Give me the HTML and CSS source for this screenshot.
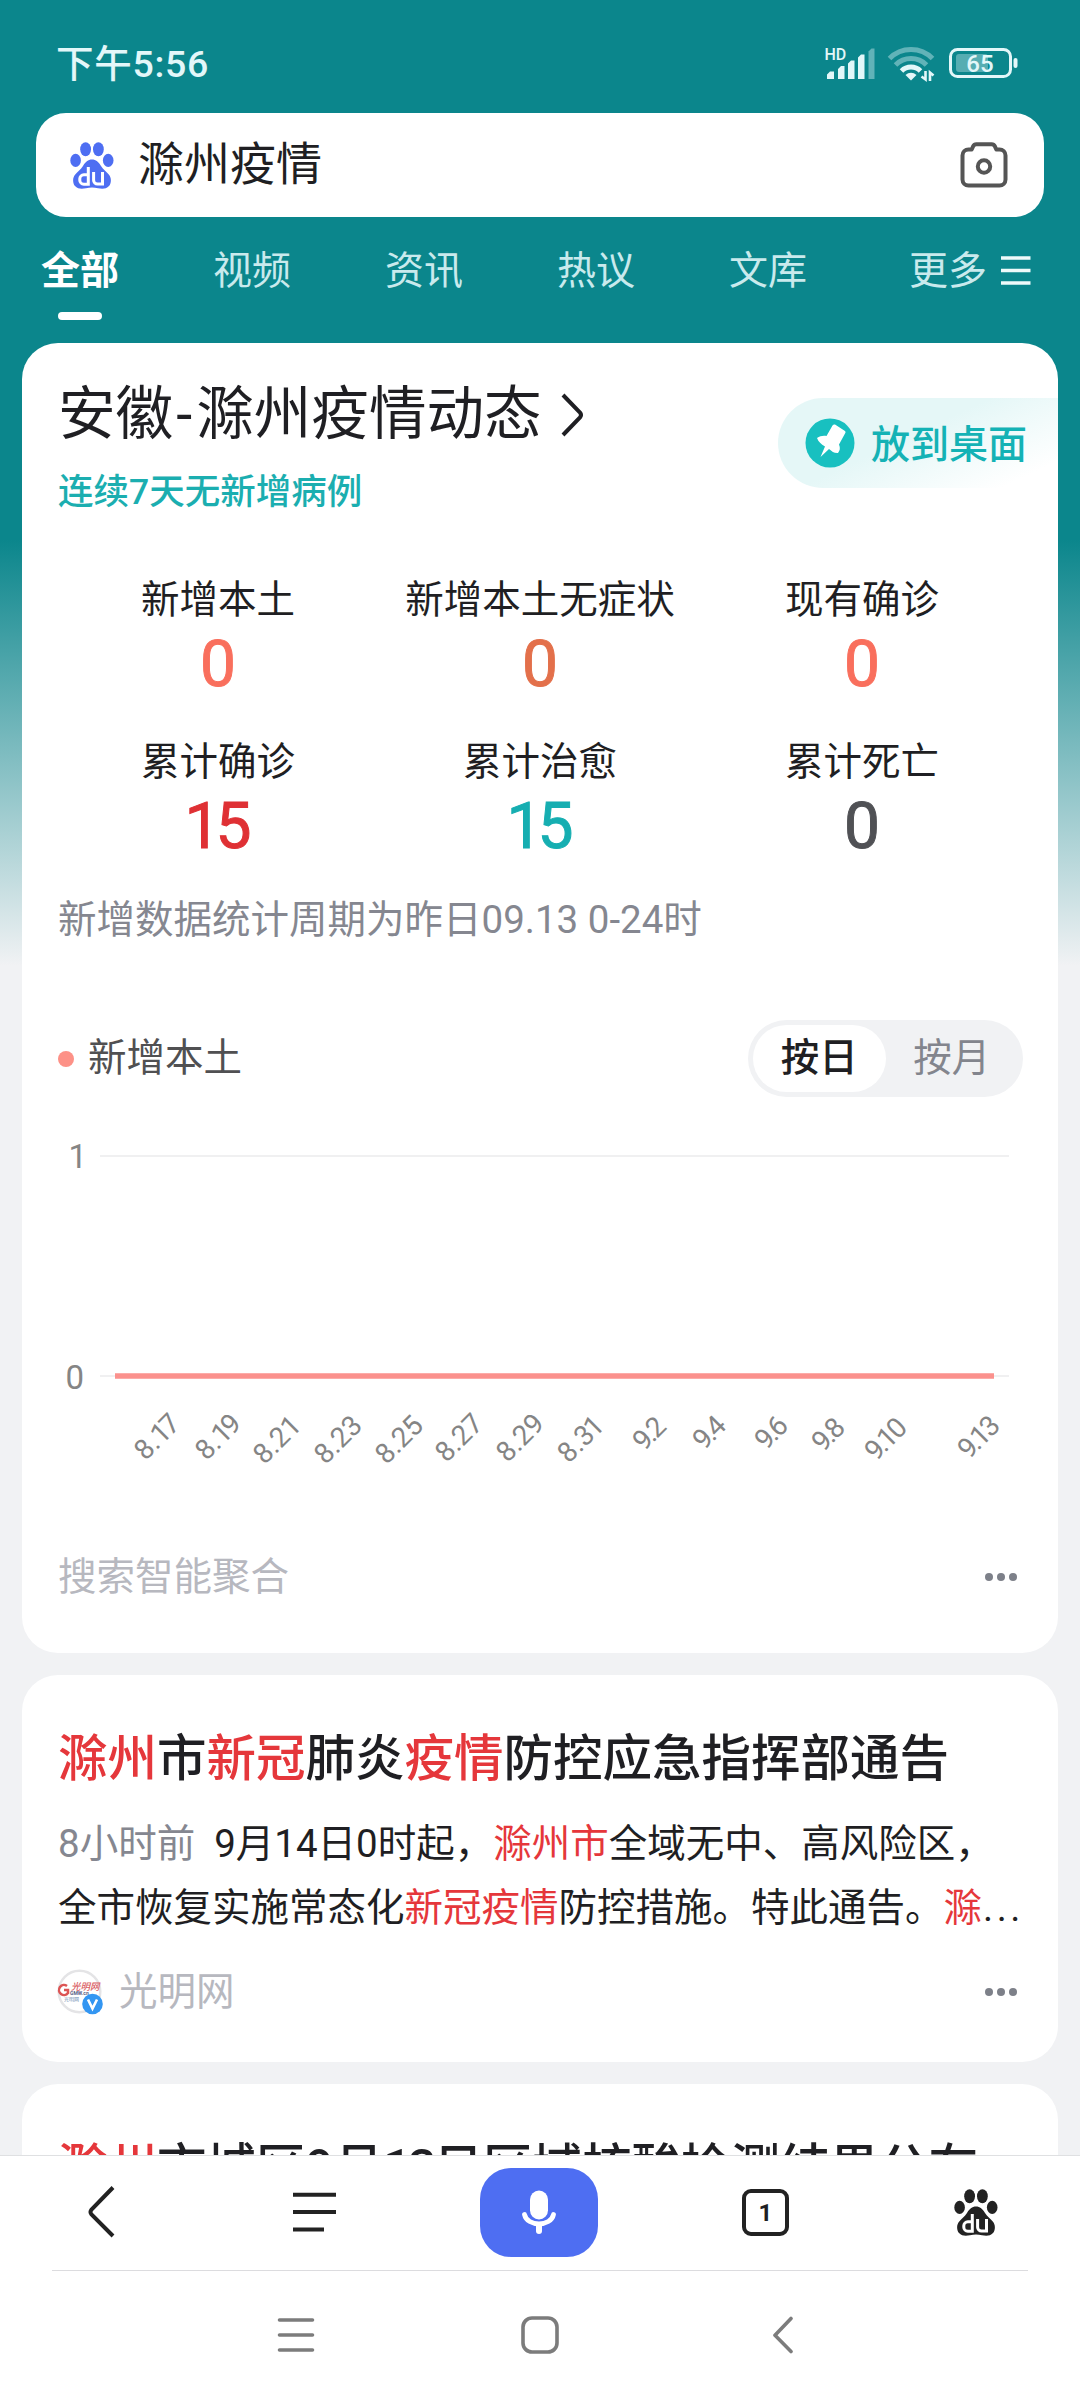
FILE: index.html
```html
<!DOCTYPE html>
<html lang="zh-CN">
<head>
<meta charset="utf-8">
<title>滁州疫情</title>
<link rel="stylesheet" href="styles.css">
</head>
<body>
<svg class="defs" width="0" height="0" aria-hidden="true">
  <symbol id="paw" viewBox="0 0 44 47">
    <ellipse cx="15.6" cy="7.2" rx="5.4" ry="7"/>
    <ellipse cx="28.4" cy="7.2" rx="5.4" ry="7"/>
    <ellipse cx="5.6" cy="18.4" rx="5.3" ry="6.6"/>
    <ellipse cx="38.2" cy="18.4" rx="5.3" ry="6.6"/>
    <path d="M22 17.600c4 0 6.600 2.600 9 6.400 2.400 3.600 5.200 5.400 8 8.800 2.600 3.200 2.400 8.400 0 11.200-3 3.400-7.600 2.900-11 2.200-4-.8-8-.8-12 0-3.400.7-8 1.200-11-2.200-2.400-2.800-2.600-8 0-11.200 2.800-3.400 5.600-5.200 8-8.800 2.400-3.800 5-6.400 9-6.400z"/>
    <g fill="none" stroke="#fff" stroke-width="3">
      <path d="M18.300 25v17.200h-4.500a4 4 0 0 1-4-4v-1.400a4 4 0 0 1 4-4h4.500"/>
      <path d="M23.600 30v8.200a3.900 3.900 0 0 0 3.900 3.900h5V30"/>
    </g>
  </symbol>
</svg>
<div class="screen">
  <header class="top">
    <div class="status">
      <span class="time">下午5:56</span>
      <svg class="status-icons" width="196" height="40" viewBox="824 43 196 40">
        <text class="hd" x="824.500" y="59.500">HD</text>
        <g fill="#e3f7f9">
          <path d="M827 79v-4.500l3-3h4V79zM838 79V69l3-3h3.500v13zM848 79V63.500l3-3h3.500V79zM858 79V57.500l3-3h3.500V79z"/>
          <path opacity=".4" d="M868.500 79V51.500l3-3h3V79z"/>
        </g>
        <g fill="none" stroke="#e3f7f9" stroke-width="5">
          <path opacity=".4" d="M889.500 58.500a30 30 0 0 1 43 0"/>
          <path opacity=".4" d="M895.500 65a22 22 0 0 1 31 0"/>
          <path d="M901.500 71a13.500 13.500 0 0 1 19 0"/>
        </g>
        <path fill="#e3f7f9" d="M911 80.500l-5.500-5.500a8 8 0 0 1 11 0z"/>
        <path fill="none" stroke="#e3f7f9" stroke-width="2.600" d="M925.500 71v8.500l-4-3M930 81v-8.500l3.500 3"/>
        <rect x="950.500" y="49.500" width="60" height="27" rx="7" fill="none" stroke="#e3f7f9" stroke-width="3"/>
        <rect x="956" y="54" width="32" height="18" rx="3" fill="#e3f7f9" opacity=".35"/>
        <rect x="1013.500" y="58" width="4" height="10" rx="2" fill="#e3f7f9"/>
        <text class="battery" x="980" y="71.500">65</text>
      </svg>
    </div>
    <div class="search">
      <svg class="search-logo" width="44" height="47"><use href="#paw"/></svg>
      <span class="query">滁州疫情</span>
      <svg class="camera" width="48" height="46" viewBox="0 0 48 46" fill="none" stroke="#555" stroke-width="4" stroke-linejoin="round">
        <path d="M8.500 7.500h3.200l1.500-3.300a3.500 3.500 0 0 1 3.200-2h15.200a3.500 3.500 0 0 1 3.200 2l1.500 3.300h3.200a6 6 0 0 1 6 6v24a6 6 0 0 1-6 6h-31a6 6 0 0 1-6-6v-24a6 6 0 0 1 6-6z"/>
        <circle cx="24" cy="24.500" r="6.200"/>
      </svg>
    </div>
    <nav class="tabs">
      <span class="tab active">全部</span>
      <span class="tab">视频</span>
      <span class="tab">资讯</span>
      <span class="tab">热议</span>
      <span class="tab">文库</span>
      <span class="tab more">更多
        <svg width="30" height="30" viewBox="0 0 30 30" stroke="#eefafa" stroke-width="3.600"><path d="M0 2h29.500M0 14.500h29.500M0 27h29.500"/></svg>
      </span>
    </nav>
  </header>

  <main class="feed">
    <section class="card stats-card">
      <div class="card-head">
        <div>
          <h1 class="title"><span>安徽<span class="hyphen">-</span>滁州疫情动态</span>
            <svg width="24" height="44" viewBox="0 0 24 44" fill="none" stroke="#1f1f23" stroke-width="4"><path d="M2 2l17 17.500q2 2.500 0 5L2 42"/></svg>
          </h1>
          <p class="subtitle">连续7天无新增病例</p>
        </div>
        <div class="pin-button">
          <svg width="50" height="50" viewBox="0 0 50 50">
            <circle cx="25" cy="25" r="24.500" fill="#18c0c0"/>
            <path fill="#fff" d="M30 6.500l10 6.500q1 1 .3 2l-6.300 11.500c1.500 3.500 1 6-1 8.500-4 .2-6-1.500-9-4L15.500 39l4.500-10.500c-4-2.500-6.500-4.500-8-8.500 3-2 6-2.500 9.500-2L27.500 7.500q1-1.500 2.500-1z"/>
          </svg>
          <span>放到桌面</span>
        </div>
      </div>
      <div class="stats">
        <div class="stat"><span>新增本土</span><b class="coral">0</b></div>
        <div class="stat"><span>新增本土无症状</span><b class="orange">0</b></div>
        <div class="stat"><span>现有确诊</span><b class="coral">0</b></div>
        <div class="stat"><span>累计确诊</span><b class="red">15</b></div>
        <div class="stat"><span>累计治愈</span><b class="teal">15</b></div>
        <div class="stat"><span>累计死亡</span><b class="gray">0</b></div>
      </div>
      <p class="note">新增数据统计周期为昨日09.13 0-24时</p>
      <div class="legend-row">
        <span class="legend">新增本土</span>
        <div class="toggle"><span class="on">按日</span><span>按月</span></div>
      </div>
      <svg class="chart" width="1036" height="366" viewBox="22 1120 1036 366">
        <path d="M100 1156h909M100 1376h909" stroke="#f0f0f1" stroke-width="2"/>
        <path d="M115 1376h879" stroke="#fb918d" stroke-width="5.500"/>
        <g class="axis-y"><text x="87" y="1168">1</text><text x="84" y="1388.500">0</text></g>
        <g class="axis-x">
          <text transform="translate(182 1425) rotate(-45)" dx="0 0 0 -3">8.17</text>
          <text transform="translate(243 1425) rotate(-45)" dx="0 0 0 -3">8.19</text>
          <text transform="translate(303 1427) rotate(-45)">8.21</text>
          <text transform="translate(364 1427) rotate(-45)">8.23</text>
          <text transform="translate(425 1427) rotate(-45)">8.25</text>
          <text transform="translate(485 1425) rotate(-45)">8.27</text>
          <text transform="translate(546 1425) rotate(-45)">8.29</text>
          <text transform="translate(606 1427) rotate(-45)" dx="0 0 0 -2">8.31</text>
          <text transform="translate(668 1428) rotate(-45)" dx="0 -3 -2">9.2</text>
          <text transform="translate(728 1427) rotate(-45)" dx="0 -3 -2">9.4</text>
          <text transform="translate(790 1427) rotate(-45)" dx="0 -3 -2">9.6</text>
          <text transform="translate(847 1429) rotate(-45)" dx="0 -3 -2">9.8</text>
          <text transform="translate(909 1429) rotate(-45)" dx="0 -3 -3 -2">9.10</text>
          <text transform="translate(1002 1427) rotate(-45)" dx="0 -3 -3 -2">9.13</text>
        </g>
      </svg>
      <div class="card-foot">
        <span class="source">搜索智能聚合</span>
        <span class="dots"><i></i><i></i><i></i></span>
      </div>
    </section>

    <section class="card news-card">
      <h2 class="headline"><em>滁州</em>市<em>新冠</em>肺炎<em>疫情</em>防控应急指挥部通告</h2>
      <p class="summary"><span class="ago">8小时前</span>9月14日0时起，<em>滁州市</em>全域无中、高风险区，<br>全市恢复实施常态化<em>新冠疫情</em>防控措施。特此通告。<em>滁</em><span class="more-text">...</span></p>
      <div class="card-foot">
        <svg class="avatar" width="46" height="46" viewBox="0 0 46 46">
          <circle cx="22.500" cy="22.500" r="20.800" fill="#fff" stroke="#e4e4e6" stroke-width="2.500"/>
          <path d="M10 17a5 5 0 1 0 1 7v-3H7" fill="none" stroke="#dc5555" stroke-width="2.500"/>
          <text class="logo-script" x="14" y="21">光明网</text>
          <text class="logo-en" x="13" y="26">GMW.cn</text>
          <text class="logo-sub" x="7" y="32">光明网</text>
          <circle cx="35.500" cy="35" r="10.300" fill="#3396f2"/>
          <path d="M31 30.500l4.500 9 4.500-9" fill="none" stroke="#fff" stroke-width="2.600"/>
        </svg>
        <span class="source">光明网</span>
        <span class="dots"><i></i><i></i><i></i></span>
      </div>
    </section>

    <section class="card next-card">
      <h2 class="headline"><em>滁州</em>市城区9月<span class="day">13</span>日区域核酸检测结果公布</h2>
    </section>
  </main>

  <footer class="bottom">
    <div class="toolbar">
      <svg class="tool-back" width="27" height="52" viewBox="0 0 27 52" fill="none" stroke="#222" stroke-width="4"><path d="M25 1.500L3.500 23.500q-2 2.500 0 5L25 50"/></svg>
      <svg class="tool-menu" width="43" height="40" viewBox="0 0 43 40" stroke="#222" stroke-width="4"><path d="M0 2.700h43M0 20h43M0 37.500h31"/></svg>
      <div class="mic">
        <svg width="36" height="46" viewBox="0 0 36 46">
          <rect x="9" y="1.500" width="18" height="29" rx="9" fill="#fff"/>
          <path d="M3.500 25.500C6 38 30 38 32.500 25.500" fill="none" stroke="#fff" stroke-width="4.800" stroke-linecap="round"/>
          <path d="M18 36v6" stroke="#fff" stroke-width="6" stroke-linecap="round"/>
        </svg>
      </div>
      <div class="tab-count">1</div>
      <svg class="tool-home" width="44" height="47"><use href="#paw"/></svg>
    </div>
    <div class="sysnav">
      <svg width="38" height="38" viewBox="0 0 38 38" stroke="#7c7c7c" stroke-width="3.600" stroke-linecap="round"><path d="M2.500 4h33M2.500 19h33M2.500 34h33"/></svg>
      <svg width="38" height="38" viewBox="0 0 38 38" fill="none" stroke="#7c7c7c" stroke-width="3.600"><rect x="2" y="2" width="34" height="34" rx="9"/></svg>
      <svg width="20" height="38" viewBox="0 0 20 38" fill="none" stroke="#7c7c7c" stroke-width="3.600" stroke-linecap="round" stroke-linejoin="round"><path d="M18 2.500L2 19.300 18 35.500"/></svg>
    </div>
  </footer>
</div>
</body>
</html>
```
FILE: styles.css
```css
* { box-sizing: border-box; }
body, h1, h2, p { margin: 0; }
h1, h2 { font-weight: 400; }
em, i { font-style: normal; }
body {
  width: 1080px;
  font-family: Roboto, "Noto Sans CJK SC", sans-serif;
  font-size: 38.500px;
  color: #1f1f23;
}
svg { display: block; flex: none; }
.defs { position: absolute; }
.screen {
  height: 2400px;
  display: flex;
  flex-direction: column;
  overflow: hidden;
  background: linear-gradient(#0b868c 0, #0b868c 540px, #f1f2f4 966px);
}

.top { height: 343px; flex: none; padding: 0 36px; }
.status {
  height: 113px;
  padding: 0 24px 0 20px;
  display: flex;
  justify-content: space-between;
  color: #e3f7f9;
}
.time { line-height: 128px; font-size: 37.500px; font-weight: 500; letter-spacing: 0.700px; }
.status-icons { margin-top: 43px; }
.hd { font-size: 16px; font-weight: 500; fill: #e3f7f9; }
.battery { font-size: 24px; font-weight: 500; fill: #e3f7f9; text-anchor: middle; }
.search {
  height: 104px;
  padding: 0 36px 0 34px;
  display: flex;
  align-items: center;
  background: #fff;
  border-radius: 30px;
}
.search-logo { fill: #4e6ef2; }
.query { margin-left: 24px; font-size: 46px; line-height: 102px; flex: 1; padding-bottom: 2px; }
.tabs {
  height: 103px;
  padding: 0 12px 0 5px;
  display: flex;
  gap: 94px;
  line-height: 108px;
  font-size: 39px;
  color: #c9eaed;
}
.tab { width: 78px; flex: none; white-space: nowrap; }
.active {
  color: #fff;
  font-weight: 700;
  display: flex;
  flex-direction: column;
  align-items: center;
}
.active::after {
  content: "";
  width: 44px;
  height: 8px;
  margin-top: -13px;
  border-radius: 4px;
  background: #fff;
}
.more { width: auto; margin-left: 8px; display: flex; align-items: center; gap: 14px; height: 108px; }

.feed {
  flex: 1;
  min-height: 0;
  padding: 0 22px;
  display: flex;
  flex-direction: column;
  gap: 22px;
  overflow: hidden;
}
.card { flex: none; background: #fff; border-radius: 36px; overflow: hidden; }
.stats-card { height: 1310px; }
.card-head { height: 215px; padding-left: 36px; display: flex; justify-content: space-between; }
.title {
  display: flex;
  align-items: center;
  gap: 19px;
  height: 80px;
  margin-top: 32px;
  font-size: 57.600px;
  line-height: 80px;
}
.hyphen { padding: 0 4px 0 3px; }
.subtitle { margin-top: 12px; font-size: 35.500px; line-height: 50px; color: #1baeb0; font-weight: 500; }
.pin-button {
  width: 280px;
  height: 90px;
  margin-top: 55px;
  padding-left: 27px;
  display: flex;
  align-items: center;
  gap: 16px;
  border-radius: 45px 0 0 45px;
  background: linear-gradient(155deg, #e5f7f7 45%, #fff 88%);
  color: #14b2b5;
  font-size: 39px;
  font-weight: 500;
}
.pin-button span { padding-bottom: 5px; }
.stats {
  display: grid;
  grid-template-columns: repeat(3, 322px);
  grid-auto-rows: 162px;
  padding-left: 35px;
}
.stat { display: flex; flex-direction: column; align-items: center; padding-top: 12px; }
.stat span { line-height: 60px; }
.stat b {
  font-size: 64px;
  font-weight: 400;
  line-height: 69px;
  letter-spacing: -5px;
  margin-left: -5px;
  -webkit-text-stroke: 1px currentColor;
}
.coral { color: #f96f5d; }
.orange { color: #e3704b; }
.red { color: #df3034; }
.teal { color: #16aeb1; }
.gray { color: #505155; }
.note { height: 110px; padding: 8px 0 0 36px; line-height: 60px; color: #858790; }
.legend-row {
  height: 109px;
  padding: 29px 35px 0 36px;
  display: flex;
  justify-content: space-between;
  margin-top: -1px;
}
.legend { display: flex; align-items: center; gap: 14px; height: 77px; line-height: 71px; padding-bottom: 3px; color: #505052; }
.legend::before { content: ""; width: 16px; height: 16px; margin-top: 3px; border-radius: 50%; background: #fd9187; }
.toggle {
  width: 275px;
  height: 77px;
  padding: 5px;
  display: flex;
  border-radius: 39px;
  background: #f1f2f4;
  color: #83858d;
}
.toggle span { width: 134px; height: 67px; line-height: 66px; text-align: center; border-radius: 34px; }
.toggle .on { background: #fff; color: #1f1f23; font-weight: 500; }
.chart { margin-top: 20px; }
.axis-y { font-size: 33px; fill: #858585; text-anchor: end; }
.axis-x { font-size: 28px; fill: #858585; text-anchor: end; }
.card-foot { display: flex; align-items: center; height: 60px; padding: 0 41px 0 36px; }
.stats-card .card-foot { margin-top: 61px; }
.source { flex: 1; color: #b7b8bf; line-height: 60px; }
.dots { display: flex; gap: 4px; }
.dots i { width: 8px; height: 8px; border-radius: 50%; background: #7d8089; }

.news-card { height: 387px; }
.headline { padding: 49px 0 0 36px; font-size: 49.500px; line-height: 70px; font-weight: 500; white-space: nowrap; }
em { color: #e5373b; }
.summary { padding: 18px 0 0 36px; line-height: 63.500px; font-size: 38.500px; white-space: nowrap; }
.ago { color: #858790; margin-right: 19px; }
.more-text { letter-spacing: 3.500px; margin-left: 1px; }
.news-card .card-foot { margin-top: 23px; padding-left: 35px; }
.avatar { margin-right: 16px; }
.logo-script { font-size: 9.500px; font-style: italic; fill: #d95c62; font-weight: 500; }
.logo-en { font-size: 5px; fill: #5a5f86; font-weight: 700; }
.logo-sub { font-size: 5px; fill: #6e8fb4; }
.next-card { height: 387px; }
.day { letter-spacing: -3px; }

.bottom { height: 245px; flex: none; border-top: 1px solid #dfe0e2; background: #fff; }
.toolbar {
  height: 115px;
  margin: 0 52px;
  padding: 0 30px 2px 36px;
  border-bottom: 1px solid #dcdcdf;
  display: grid;
  grid-template-columns: 205px 187px 262px 212px 44px;
  align-items: center;
}
.mic {
  width: 118px;
  height: 89px;
  border-radius: 31px;
  background: #4e6ef2;
  display: flex;
  align-items: center;
  justify-content: center;
}
.tab-count {
  width: 47px;
  height: 47px;
  border: 4px solid #222;
  border-radius: 9px;
  text-align: center;
  font-size: 24px;
  line-height: 40px;
  font-weight: 700;
}
.tool-home { fill: #222; }
.sysnav {
  height: 127px;
  padding-left: 277px;
  display: grid;
  grid-template-columns: 244px 252px 20px;
  align-items: center;
}
```
